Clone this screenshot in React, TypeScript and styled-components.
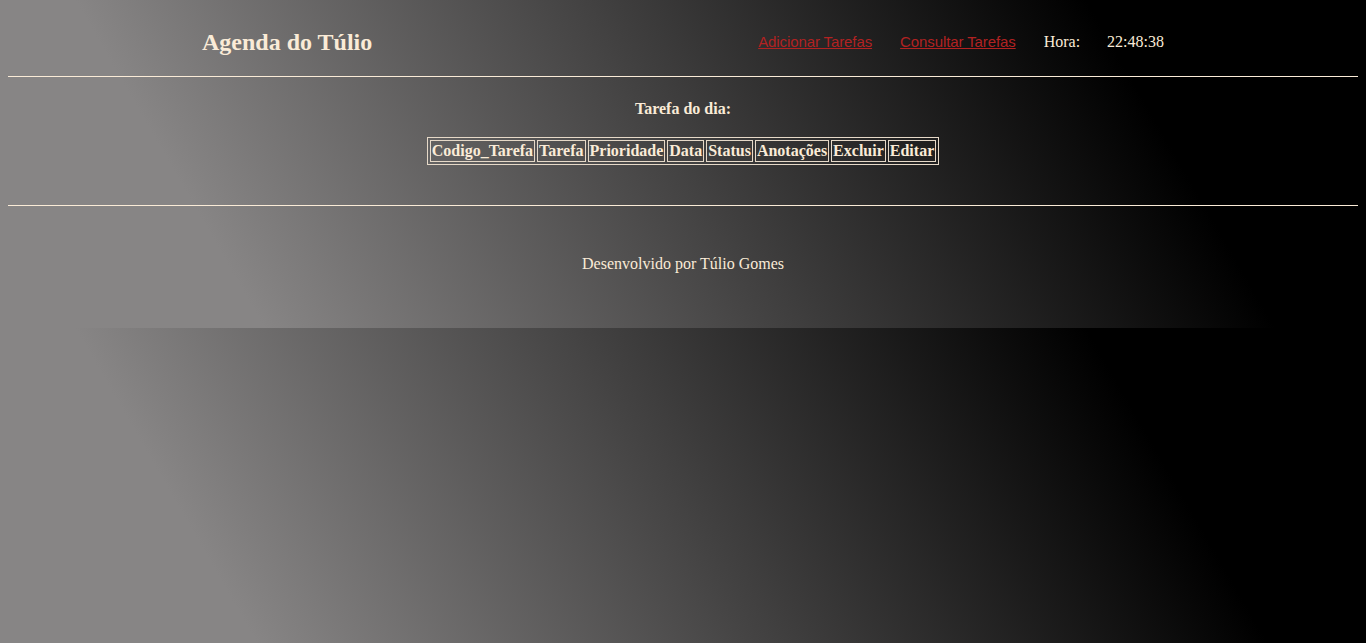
import React from "react";
import styled, { createGlobalStyle } from "styled-components";

const cream = "#faebd7";

const Global = createGlobalStyle`
  html {
    margin: 0;
  }
  body {
    margin: 8px;
    color: ${cream};
    font-family: "Liberation Serif", "Times New Roman", serif;
    font-size: 16px;
    background-image: linear-gradient(60deg, #878585 17%, #000000 82%);
    background-size: 100% 328px;
    background-repeat: repeat;
  }
`;

const Page = styled.div`
  display: flex;
  flex-direction: column;
  height: 312px;
`;

const Header = styled.header`
  display: flex;
  align-items: center;
  justify-content: space-between;
  height: 68px;
  padding: 0 194px;
`;

const Title = styled.h2`
  margin: 0;
  font-size: 24px;
  font-weight: bold;
  color: ${cream};
`;

const Nav = styled.nav`
  display: flex;
  align-items: baseline;
  gap: 28px;
`;

const NavLink = styled.a`
  font-family: "Liberation Sans", Arial, sans-serif;
  font-size: 15px;
  letter-spacing: -0.1px;
  color: #b22222;
  text-decoration: underline;
  cursor: pointer;
`;

const NavText = styled.span<{ $gap?: number }>`
  font-size: 16px;
  color: ${cream};
  margin-left: ${(p) => p.$gap ?? 0}px;
`;

const Rule = styled.div`
  border-top: 1px solid ${cream};
  height: 0;
`;

const Section = styled.section`
  display: flex;
  flex-direction: column;
  align-items: center;
  padding-top: 23px;
  height: 128px;
  box-sizing: border-box;
`;

const Heading = styled.div`
  font-weight: bold;
  line-height: 18px;
  margin-bottom: 19px;
`;

const Table = styled.table`
  border: 1px solid #e6d9c8;
  border-spacing: 2px;
  border-collapse: separate;
`;

const Th = styled.th`
  border: 1px solid #e6d9c8;
  padding: 1px;
  font-weight: bold;
  font-size: 16px;
  line-height: 18px;
  color: ${cream};
`;

const Footer = styled.footer`
  display: flex;
  justify-content: center;
  padding-top: 49px;
  line-height: 18px;
`;

const columns = [
  "Codigo_Tarefa",
  "Tarefa",
  "Prioridade",
  "Data",
  "Status",
  "Anotações",
  "Excluir",
  "Editar",
];

export default function App() {
  return (
    <>
      <Global />
      <Page>
        <Header>
          <Title>Agenda do Túlio</Title>
          <Nav>
            <NavLink>Adicionar Tarefas</NavLink>
            <NavLink>Consultar Tarefas</NavLink>
            <NavText>Hora:</NavText>
            <NavText $gap={-1}>22:48:38</NavText>
          </Nav>
        </Header>
        <Rule />
        <Section>
          <Heading>Tarefa do dia:</Heading>
          <Table>
            <thead>
              <tr>
                {columns.map((c) => (
                  <Th key={c}>{c}</Th>
                ))}
              </tr>
            </thead>
          </Table>
        </Section>
        <Rule />
        <Footer>Desenvolvido por Túlio Gomes</Footer>
      </Page>
    </>
  );
}
